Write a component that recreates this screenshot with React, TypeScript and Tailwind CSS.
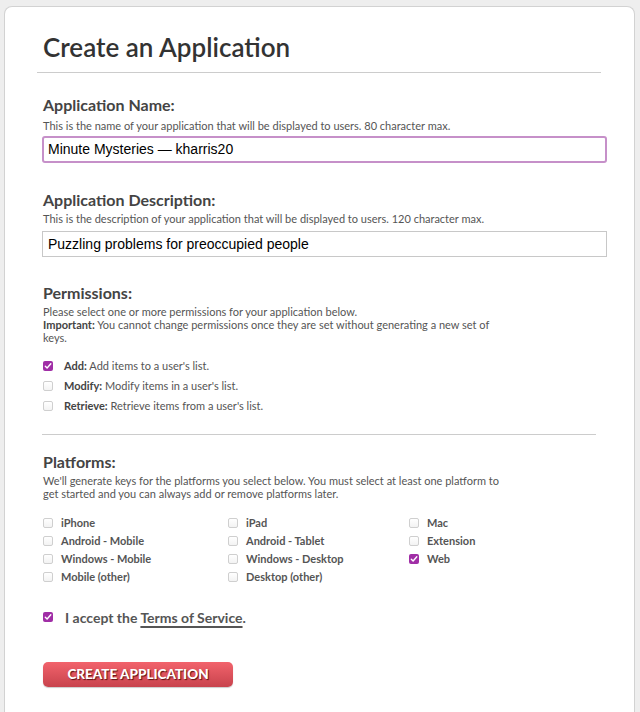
const sans = "font-['Lato','Open_Sans',sans-serif]";

function Box({ checked }: { checked?: boolean }) {
  return checked ? (
    <span className="flex h-[10px] w-[10px] shrink-0 items-center justify-center rounded-[2px] bg-[#a02ea6]">
      <svg width="8" height="8" viewBox="0 0 8 8" fill="none">
        <path d="M1.3 4.2 3.1 6 6.8 1.8" stroke="white" strokeWidth="1.4" strokeLinecap="round" strokeLinejoin="round" />
      </svg>
    </span>
  ) : (
    <span className="h-[10px] w-[10px] shrink-0 rounded-[2px] border border-[#cfcfcf] bg-gradient-to-b from-white to-[#f3f3f3]" />
  );
}

function Perm({ name, text, checked }: { name: string; text: string; checked?: boolean }) {
  return (
    <div className="flex h-[20px] items-center gap-[11px] pl-[1px]">
      <Box checked={checked} />
      <span className="text-[11px] text-[#555]">
        <b className="font-bold text-[#444]">{name}:</b> {text}
      </span>
    </div>
  );
}

function Plat({ label, checked }: { label: string; checked?: boolean }) {
  return (
    <div className="flex h-[18px] items-center gap-[8px] pl-[1px]">
      <Box checked={checked} />
      <span className="text-[11px] font-bold text-[#555]">{label}</span>
    </div>
  );
}

const platforms: [string, boolean?][] = [
  ["iPhone"], ["iPad"], ["Mac"],
  ["Android - Mobile"], ["Android - Tablet"], ["Extension"],
  ["Windows - Mobile"], ["Windows - Desktop"], ["Web", true],
  ["Mobile (other)"], ["Desktop (other)"],
];

export default function App() {
  return (
    <div className={`min-h-screen bg-[#eeeeee] pl-[4px] pr-[5px] pt-[6px] ${sans}`}>
      <div className="min-h-[720px] rounded-t-[8px] border border-b-0 border-[#d2d2d2] bg-white">
        {/* header */}
        <div className="ml-[32px] mr-[33px] border-b border-[#cccccc] pb-[9px] pl-[6px] pt-[24px]">
          <h1 className="text-[26px] font-semibold leading-[32px] text-[#333]">Create an Application</h1>
        </div>

        <div className="ml-[37px] mr-[27px]">
          <h2 className="mt-[23px] pl-[1px] text-[16px] font-bold leading-[18px] text-[#444]">Application Name:</h2>
          <p className="mt-[5px] pl-[1px] text-[11px] leading-[14px] text-[#555]">
            This is the name of your application that will be displayed to users. 80 character max.
          </p>
          <div className="mt-[3px] flex h-[27px] items-center rounded-[3px] border-2 border-[#c690c9] px-[4px] font-['Liberation_Sans',Arial,sans-serif] text-[14px] text-black">
            Minute Mysteries — kharris20
          </div>

          <h2 className="mt-[28px] pl-[1px] text-[16px] font-bold leading-[18px] text-[#444]">Application Description:</h2>
          <p className="mt-[3px] pl-[1px] text-[11px] leading-[14px] text-[#555]">
            This is the description of your application that will be displayed to users. 120 character max.
          </p>
          <div className="mt-[5px] flex h-[26px] items-center border border-[#c8c8c8] px-[5px] font-['Liberation_Sans',Arial,sans-serif] text-[14px] text-black">
            Puzzling problems for preoccupied people
          </div>

          <h2 className="mt-[27px] pl-[1px] text-[16px] font-bold leading-[18px] text-[#444]">Permissions:</h2>
          <p className="mt-[3px] pl-[1px] text-[11px] leading-[13px] text-[#555]">
            Please select one or more permissions for your application below.
            <br />
            <b className="font-bold text-[#444]">Important:</b> You cannot change permissions once they are set without generating a new set of
            <br />
            keys.
          </p>
          <div className="mt-[12px] flex flex-col">
            <Perm name="Add" text="Add items to a user's list." checked />
            <Perm name="Modify" text="Modify items in a user's list." />
            <Perm name="Retrieve" text="Retrieve items from a user's list." />
          </div>

          <div className="mr-[11px] mt-[18px] border-t border-[#cccccc]" />

          <h2 className="mt-[18px] pl-[1px] text-[16px] font-bold leading-[18px] text-[#444]">Platforms:</h2>
          <p className="mt-[3px] pl-[1px] text-[11px] leading-[13px] text-[#555]">
            We'll generate keys for the platforms you select below. You must select at least one platform to
            <br />
            get started and you can always add or remove platforms later.
          </p>
          <div className="mt-[14px] grid grid-cols-[185px_181px_1fr]">
            {platforms.map(([l, c]) => (
              <Plat key={l} label={l} checked={c} />
            ))}
          </div>

          <div className="mt-[22px] flex h-[18px] items-center gap-[12px] pl-[1px]">
            <Box checked />
            <span className="text-[14px] font-bold text-[#555]">
              I accept the <span className="underline decoration-[1.5px] underline-offset-[3px]">Terms of Service</span>.
            </span>
          </div>

          <button className="ml-[1px] mt-[36px] flex h-[25px] w-[190px] items-center justify-center rounded-[5px] bg-gradient-to-b from-[#f2636c] to-[#c8434d] text-[13.5px] font-black uppercase text-white shadow-[0_1px_1px_rgba(0,0,0,0.2)] [text-shadow:1px_1px_1px_rgba(60,0,0,0.8)]">
            Create Application
          </button>
        </div>
      </div>
    </div>
  );
}
